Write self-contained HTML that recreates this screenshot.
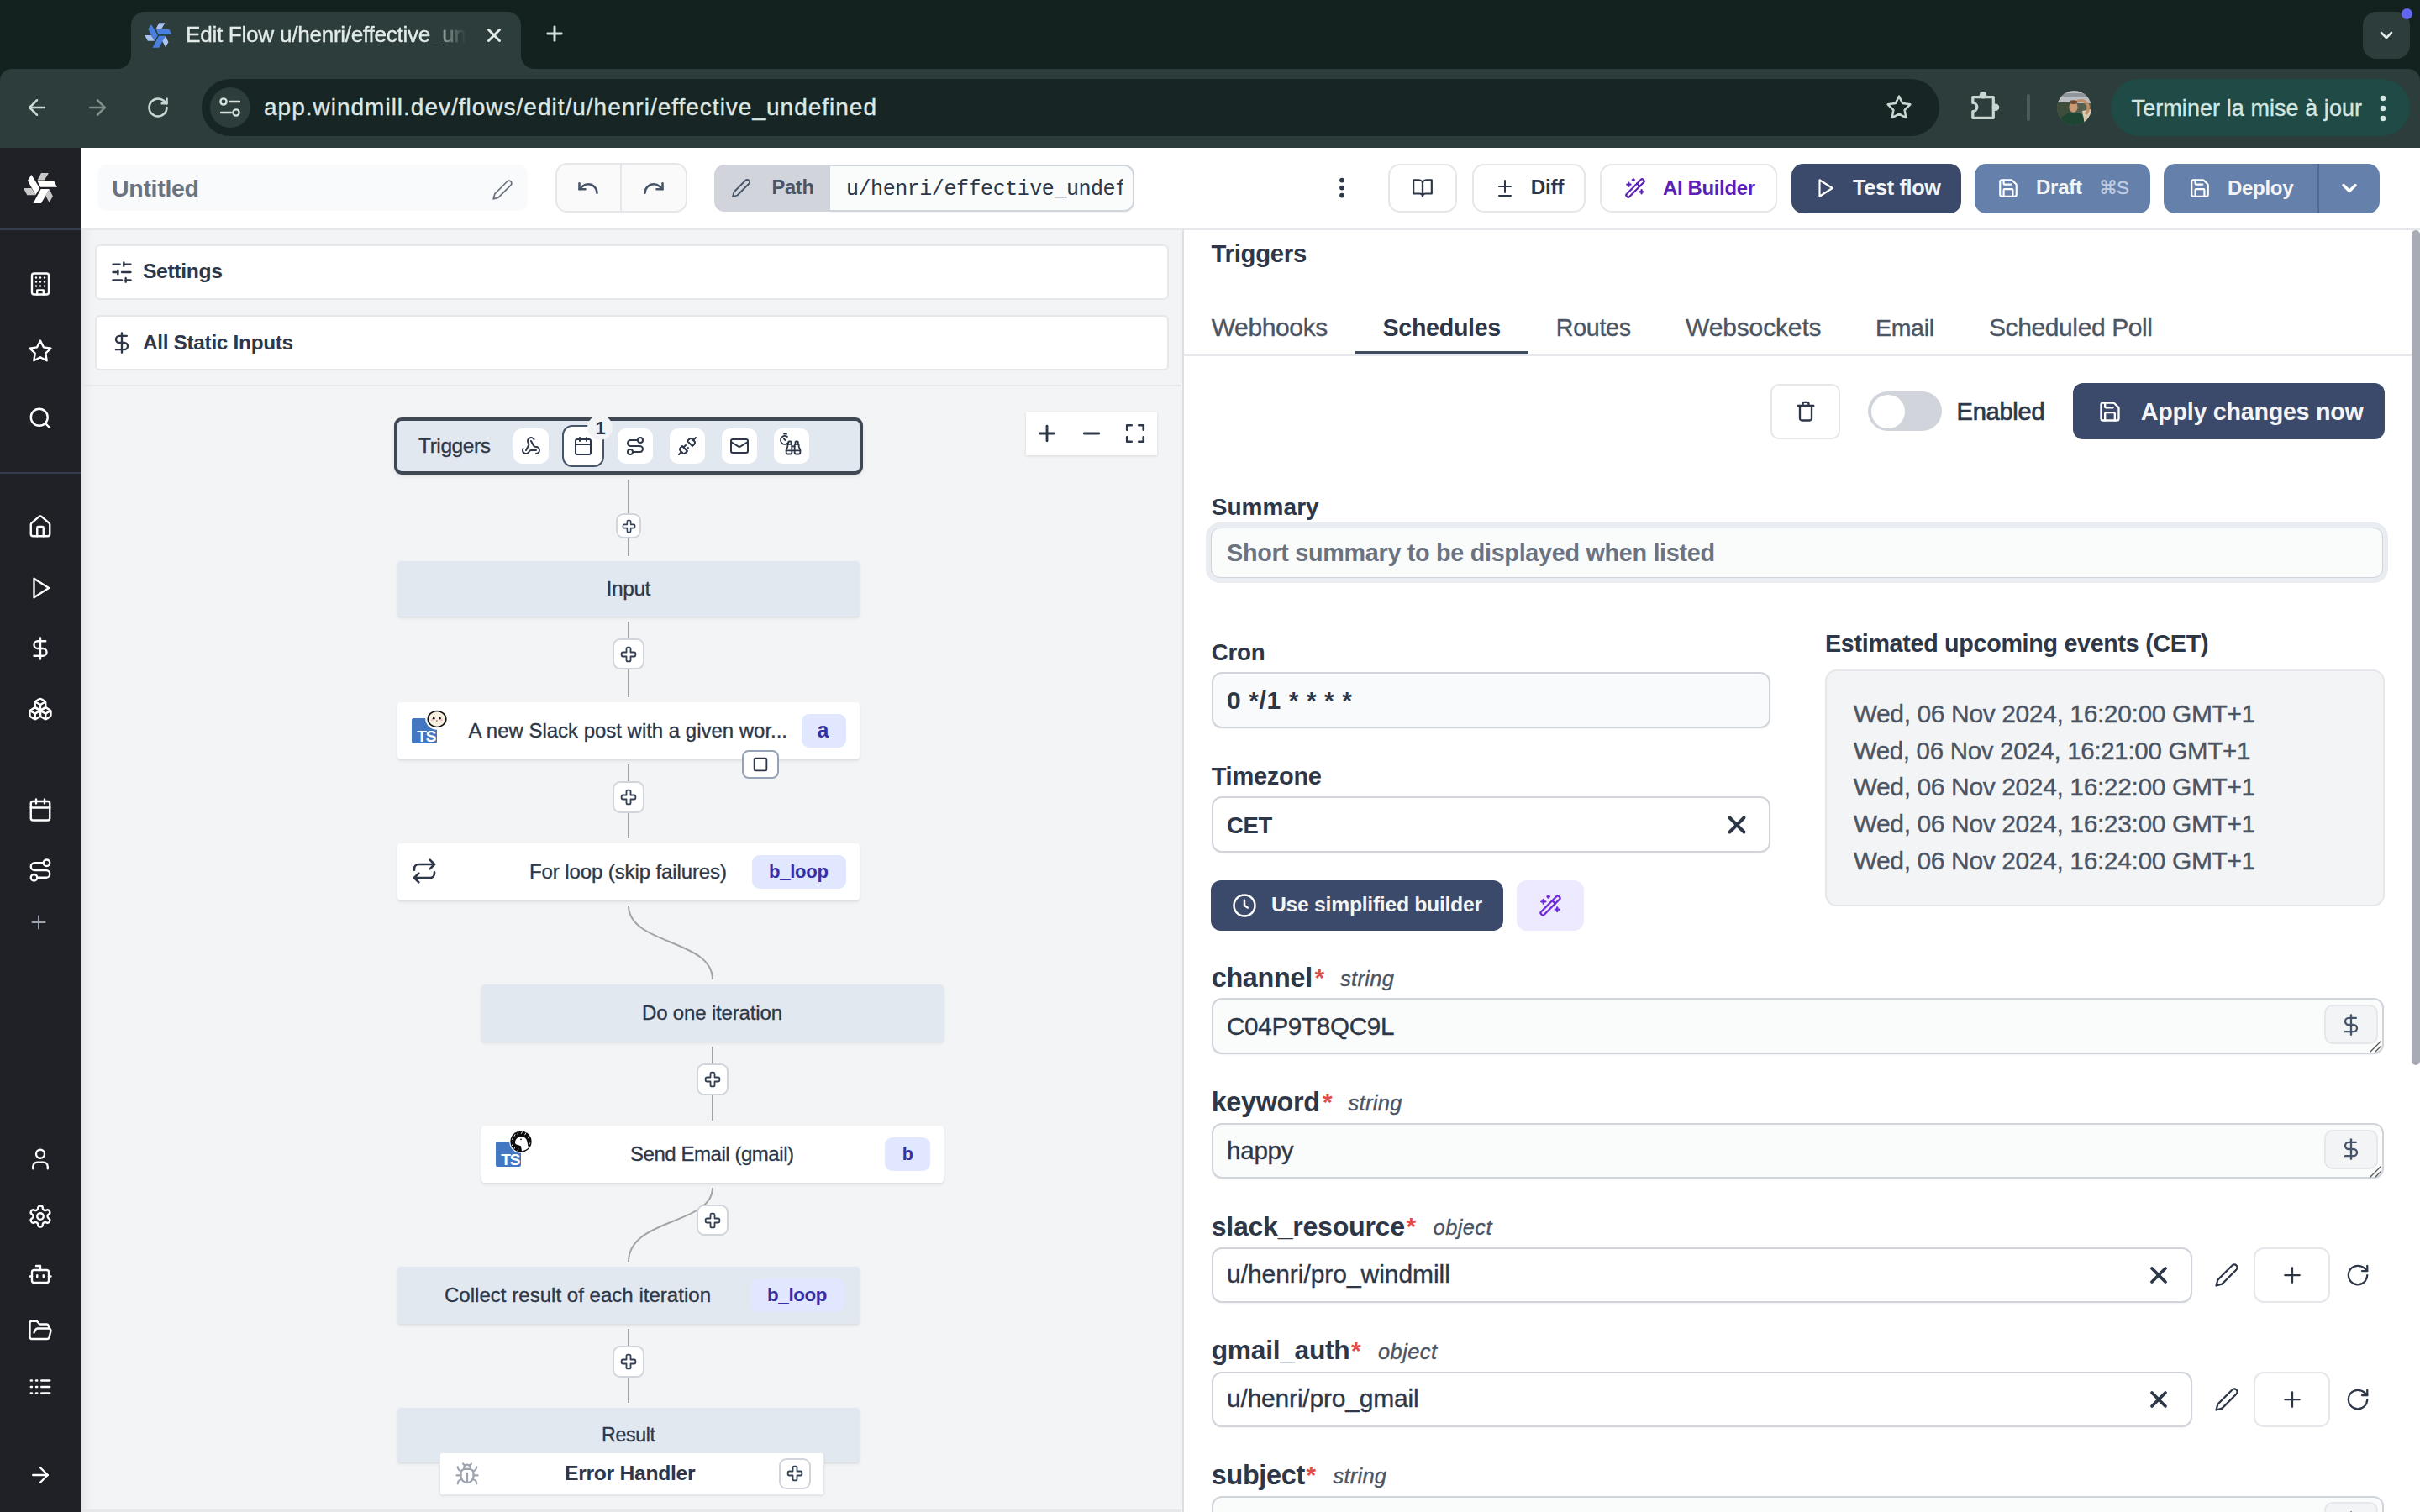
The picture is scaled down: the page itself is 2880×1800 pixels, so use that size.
<!DOCTYPE html>
<html><head><meta charset="utf-8"><style>
html,body{margin:0;padding:0;}
body{width:2880px;height:1800px;position:relative;overflow:hidden;background:#fff;font-family:"Liberation Sans",sans-serif;}
.t{position:absolute;white-space:pre;line-height:1;}
svg{overflow:visible;}
</style></head><body>
<div style="position:absolute;left:0px;top:0px;width:2880px;height:176px;background:#13221f;"></div>
<div style="position:absolute;left:0px;top:82px;width:2880px;height:94px;background:#2c3d3b;border-radius:14px 14px 0 0;"></div>
<div style="position:absolute;left:156px;top:14px;width:464px;height:68px;background:#2c3d3b;border-radius:16px 16px 0 0;"></div>
<svg style="position:absolute;left:140px;top:66px" width="16" height="16"><path d="M0 16 A16 16 0 0 0 16 0 V16 Z" fill="#2c3d3b"/></svg>
<svg style="position:absolute;left:620px;top:66px" width="16" height="16"><path d="M16 16 A16 16 0 0 1 0 0 V16 Z" fill="#2c3d3b"/></svg>
<svg style="position:absolute;left:172px;top:27px" width="33" height="30" viewBox="295 430 690 615" preserveAspectRatio="none">
<polygon points="580,590 905,590 975,718 640,718" fill="#4a7fe0"/>
<polygon points="655,435 805,435 720,580 580,580" fill="#a9c3f0"/>
<polygon points="385,590 460,470 625,740 545,875" fill="#4a7fe0"/>
<polygon points="300,740 460,740 545,878 375,878" fill="#a9c3f0"/>
<polygon points="650,755 820,755 655,1040 495,1040" fill="#4a7fe0"/>
<polygon points="740,880 820,760 890,905 815,1025" fill="#a9c3f0"/>
</svg>
<div id="t1" class="t" style="left:221.0px;top:28.3px;font-size:26.18px;color:#e3ebe8;font-weight:400;font-family:'Liberation Sans', sans-serif;letter-spacing:-0.300px;-webkit-text-stroke:0.35px #e3ebe8;-webkit-mask-image:linear-gradient(90deg,#000 85%,transparent 100%);">Edit Flow u/henri/effective_un</div>
<svg style="position:absolute;left:575.0px;top:29.0px;" width="26" height="26" viewBox="0 0 24 24" fill="none" stroke="#e3ebe8" stroke-width="2.7" stroke-linecap="round" stroke-linejoin="round"><path d="M18 6 6 18"/><path d="m6 6 12 12"/></svg>
<svg style="position:absolute;left:646.0px;top:26.0px;" width="28" height="28" viewBox="0 0 24 24" fill="none" stroke="#d5e0dc" stroke-width="2.5" stroke-linecap="round" stroke-linejoin="round"><path d="M5 12h14"/><path d="M12 5v14"/></svg>
<div style="position:absolute;left:2812px;top:14px;width:56px;height:56px;background:#2c3d3b;border-radius:16px;"></div>
<svg style="position:absolute;left:2828.0px;top:30.0px;" width="24" height="24" viewBox="0 0 24 24" fill="none" stroke="#e3ebe8" stroke-width="2.6" stroke-linecap="round" stroke-linejoin="round"><path d="m6 9 6 6 6-6"/></svg>
<div style="position:absolute;left:2857.5px;top:9.5px;width:13px;height:13px;background:#6366f1;border-radius:50%;"></div>
<svg style="position:absolute;left:29.0px;top:113.0px;" width="30" height="30" viewBox="0 0 24 24" fill="none" stroke="#c9d6d2" stroke-width="2" stroke-linecap="round" stroke-linejoin="round"><path d="m12 19-7-7 7-7"/><path d="M19 12H5"/></svg>
<svg style="position:absolute;left:101.0px;top:113.0px;" width="30" height="30" viewBox="0 0 24 24" fill="none" stroke="#7d8e8a" stroke-width="2" stroke-linecap="round" stroke-linejoin="round"><path d="M5 12h14"/><path d="m12 5 7 7-7 7"/></svg>
<svg style="position:absolute;left:174.0px;top:114.0px;" width="28" height="28" viewBox="0 0 24 24" fill="none" stroke="#c9d6d2" stroke-width="2.2" stroke-linecap="round" stroke-linejoin="round"><path d="M21 12a9 9 0 1 1-9-9c2.52 0 4.93 1 6.74 2.74L21 8"/><path d="M21 3v5h-5"/></svg>
<div style="position:absolute;left:240px;top:94px;width:2068px;height:68px;background:#172624;border-radius:34px;"></div>
<div style="position:absolute;left:250px;top:104px;width:48px;height:48px;background:#2c3d3b;border-radius:50%;"></div>
<svg style="position:absolute;left:260px;top:115px" width="28" height="26" viewBox="0 0 28 26" fill="none" stroke="#d5e0dc" stroke-width="2.4" stroke-linecap="round"><circle cx="6" cy="6" r="3.6"/><path d="M13 6h12"/><circle cx="21" cy="19" r="3.6"/><path d="M3 19h12"/></svg>
<div id="t2" class="t" style="left:314.0px;top:113.8px;font-size:28.0px;color:#dfe7e4;font-weight:400;font-family:'Liberation Sans', sans-serif;letter-spacing:1.000px;-webkit-text-stroke:0.35px #dfe7e4;">app.windmill.dev/flows/edit/u/henri/effective_undefined</div>
<svg style="position:absolute;left:2244.0px;top:112.0px;" width="32" height="32" viewBox="0 0 24 24" fill="none" stroke="#c9d6d2" stroke-width="1.9" stroke-linecap="round" stroke-linejoin="round"><polygon points="12 2 15.09 8.26 22 9.27 17 14.14 18.18 21.02 12 17.77 5.82 21.02 7 14.14 2 9.27 8.91 8.26 12 2"/></svg>
<svg style="position:absolute;left:0;top:0" width="2880" height="176" fill="none"><path d="M2347.8 115.6 H2372.3 V140.3 H2347.8 V132.5 A5 5 0 0 0 2347.8 122.5 Z" stroke="#c9d6d2" stroke-width="3.2" stroke-linejoin="round"/><circle cx="2360" cy="113.3" r="4.3" fill="#c9d6d2"/><circle cx="2375" cy="127.8" r="4.3" fill="#c9d6d2"/></svg>
<div style="position:absolute;left:2412px;top:112px;width:4px;height:32px;background:#4a5a57;border-radius:2px;"></div>
<svg style="position:absolute;left:2447.5px;top:107.5px" width="41" height="41" viewBox="0 0 41 41"><defs><clipPath id="av"><circle cx="20.5" cy="20.5" r="20.5"/></clipPath></defs><g clip-path="url(#av)"><rect width="41" height="41" fill="#5d6b5a"/><rect y="0" width="41" height="15" fill="#b9bec2"/><rect x="6" y="3" width="30" height="4" fill="#8f969b"/><rect x="0" y="14" width="17" height="18" fill="#3e4c3c"/><rect x="22" y="15" width="19" height="10" fill="#55604f"/><path d="M30 24 L41 22 V41 H33 Z" fill="#d8cdb3"/><path d="M2 36 Q9 26 19 25.5 Q29 25 31 30 L33 41 H2 Z" fill="#1e4533"/><path d="M24 13 Q33 9 37 18 Q38 24 34 28" stroke="#c08d66" stroke-width="3.6" fill="none"/><ellipse cx="19.5" cy="19.5" rx="5" ry="6.2" fill="#c99a74"/><ellipse cx="19.5" cy="13.6" rx="4.8" ry="2.4" fill="#6b4a2f"/></g></svg>
<div style="position:absolute;left:2512px;top:94px;width:356px;height:68px;background:#1f4a45;border-radius:34px;"></div>
<div id="t3" class="t" style="left:2536.6px;top:115.6px;font-size:27.0px;color:#d3e6e1;font-weight:400;font-family:'Liberation Sans', sans-serif;letter-spacing:0.064px;-webkit-text-stroke:0.35px #d3e6e1;">Terminer la mise à jour</div>
<svg style="position:absolute;left:2830px;top:112px" width="12" height="34" viewBox="0 0 12 34"><circle cx="6" cy="5" r="3.3" fill="#d3e6e1"/><circle cx="6" cy="17" r="3.3" fill="#d3e6e1"/><circle cx="6" cy="29" r="3.3" fill="#d3e6e1"/></svg>
<div style="position:absolute;left:0px;top:176px;width:96px;height:1624px;background:#1f2127;"></div>
<div style="position:absolute;left:0px;top:271.5px;width:96px;height:2px;background:#353c4b;"></div>
<div style="position:absolute;left:0px;top:561.5px;width:96px;height:2px;background:#353c4b;"></div>
<svg style="position:absolute;left:10px;top:180px" width="80" height="90" viewBox="0 0 1344 1512">
<polygon points="578,592 905,588 975,718 640,718" fill="#ffffff"/>
<polygon points="655,435 805,435 720,580 580,580" fill="#c9c9c9"/>
<polygon points="385,590 460,470 625,740 545,875" fill="#ffffff"/>
<polygon points="300,740 460,740 545,878 375,878" fill="#c9c9c9"/>
<polygon points="650,755 820,755 655,1040 495,1040" fill="#ffffff"/>
<polygon points="740,880 820,760 890,905 815,1025" fill="#c9c9c9"/>
</svg>
<svg style="position:absolute;left:33.0px;top:323.0px;" width="30" height="30" viewBox="0 0 24 24" fill="none" stroke="#ffffff" stroke-width="1.9" stroke-linecap="round" stroke-linejoin="round"><rect width="16" height="20" x="4" y="2" rx="2" ry="2"/><path d="M9 22v-4h6v4"/><path d="M8 6h.01"/><path d="M16 6h.01"/><path d="M12 6h.01"/><path d="M12 10h.01"/><path d="M12 14h.01"/><path d="M16 10h.01"/><path d="M16 14h.01"/><path d="M8 10h.01"/><path d="M8 14h.01"/></svg>
<svg style="position:absolute;left:33.0px;top:403.0px;" width="30" height="30" viewBox="0 0 24 24" fill="none" stroke="#ffffff" stroke-width="1.9" stroke-linecap="round" stroke-linejoin="round"><polygon points="12 2 15.09 8.26 22 9.27 17 14.14 18.18 21.02 12 17.77 5.82 21.02 7 14.14 2 9.27 8.91 8.26 12 2"/></svg>
<svg style="position:absolute;left:33.0px;top:483.0px;" width="30" height="30" viewBox="0 0 24 24" fill="none" stroke="#ffffff" stroke-width="1.9" stroke-linecap="round" stroke-linejoin="round"><circle cx="11" cy="11" r="8"/><path d="m21 21-4.3-4.3"/></svg>
<svg style="position:absolute;left:33.0px;top:612.0px;" width="30" height="30" viewBox="0 0 24 24" fill="none" stroke="#ffffff" stroke-width="1.9" stroke-linecap="round" stroke-linejoin="round"><path d="M15 21v-8a1 1 0 0 0-1-1h-4a1 1 0 0 0-1 1v8"/><path d="M3 10a2 2 0 0 1 .709-1.528l7-5.999a2 2 0 0 1 2.582 0l7 5.999A2 2 0 0 1 21 10v9a2 2 0 0 1-2 2H5a2 2 0 0 1-2-2z"/></svg>
<svg style="position:absolute;left:33.0px;top:685.0px;" width="30" height="30" viewBox="0 0 24 24" fill="none" stroke="#ffffff" stroke-width="1.9" stroke-linecap="round" stroke-linejoin="round"><polygon points="6 3 20 12 6 21 6 3"/></svg>
<svg style="position:absolute;left:33.0px;top:757.0px;" width="30" height="30" viewBox="0 0 24 24" fill="none" stroke="#ffffff" stroke-width="1.9" stroke-linecap="round" stroke-linejoin="round"><line x1="12" x2="12" y1="2" y2="22"/><path d="M17 5H9.5a3.5 3.5 0 0 0 0 7h5a3.5 3.5 0 0 1 0 7H6"/></svg>
<svg style="position:absolute;left:33.0px;top:829.0px;" width="30" height="30" viewBox="0 0 24 24" fill="none" stroke="#ffffff" stroke-width="1.9" stroke-linecap="round" stroke-linejoin="round"><path d="M2.97 12.92A2 2 0 0 0 2 14.63v3.24a2 2 0 0 0 .97 1.71l3 1.8a2 2 0 0 0 2.06 0L12 19v-5.5l-5-3-4.03 2.42Z"/><path d="m7 16.5-4.74-2.85"/><path d="m7 16.5 5-3"/><path d="M7 16.5v5.17"/><path d="M12 13.5V19l3.97 2.38a2 2 0 0 0 2.06 0l3-1.8a2 2 0 0 0 .97-1.71v-3.24a2 2 0 0 0-.97-1.71L17 10.5l-5 3Z"/><path d="m17 16.5-5-3"/><path d="m17 16.5 4.74-2.85"/><path d="M17 16.5v5.17"/><path d="M7.97 4.42A2 2 0 0 0 7 6.13v4.37l5 3 5-3V6.13a2 2 0 0 0-.97-1.71l-3-1.8a2 2 0 0 0-2.06 0l-3 1.8Z"/><path d="M12 8 7.26 5.15"/><path d="m12 8 4.74-2.85"/><path d="M12 13.5V8"/></svg>
<svg style="position:absolute;left:33.0px;top:949.0px;" width="30" height="30" viewBox="0 0 24 24" fill="none" stroke="#ffffff" stroke-width="1.9" stroke-linecap="round" stroke-linejoin="round"><rect width="18" height="18" x="3" y="4" rx="2" ry="2"/><line x1="16" x2="16" y1="2" y2="6"/><line x1="8" x2="8" y1="2" y2="6"/><line x1="3" x2="21" y1="10" y2="10"/></svg>
<svg style="position:absolute;left:33.0px;top:1021.0px;" width="30" height="30" viewBox="0 0 24 24" fill="none" stroke="#ffffff" stroke-width="1.9" stroke-linecap="round" stroke-linejoin="round"><circle cx="6" cy="19" r="3"/><path d="M9 19h8.5a3.5 3.5 0 0 0 0-7h-11a3.5 3.5 0 0 1 0-7H15"/><circle cx="18" cy="5" r="3"/></svg>
<svg style="position:absolute;left:33.0px;top:1365.0px;" width="30" height="30" viewBox="0 0 24 24" fill="none" stroke="#ffffff" stroke-width="1.9" stroke-linecap="round" stroke-linejoin="round"><path d="M19 21v-2a4 4 0 0 0-4-4H9a4 4 0 0 0-4 4v2"/><circle cx="12" cy="7" r="4"/></svg>
<svg style="position:absolute;left:33.0px;top:1433.0px;" width="30" height="30" viewBox="0 0 24 24" fill="none" stroke="#ffffff" stroke-width="1.9" stroke-linecap="round" stroke-linejoin="round"><path d="M12.22 2h-.44a2 2 0 0 0-2 2v.18a2 2 0 0 1-1 1.73l-.43.25a2 2 0 0 1-2 0l-.15-.08a2 2 0 0 0-2.73.73l-.22.38a2 2 0 0 0 .73 2.73l.15.1a2 2 0 0 1 1 1.72v.51a2 2 0 0 1-1 1.74l-.15.09a2 2 0 0 0-.73 2.73l.22.38a2 2 0 0 0 2.73.73l.15-.08a2 2 0 0 1 2 0l.43.25a2 2 0 0 1 1 1.73V20a2 2 0 0 0 2 2h.44a2 2 0 0 0 2-2v-.18a2 2 0 0 1 1-1.73l.43-.25a2 2 0 0 1 2 0l.15.08a2 2 0 0 0 2.73-.73l.22-.39a2 2 0 0 0-.73-2.73l-.15-.08a2 2 0 0 1-1-1.74v-.5a2 2 0 0 1 1-1.74l.15-.09a2 2 0 0 0 .73-2.73l-.22-.38a2 2 0 0 0-2.73-.73l-.15.08a2 2 0 0 1-2 0l-.43-.25a2 2 0 0 1-1-1.73V4a2 2 0 0 0-2-2z"/><circle cx="12" cy="12" r="3"/></svg>
<svg style="position:absolute;left:33.0px;top:1502.0px;" width="30" height="30" viewBox="0 0 24 24" fill="none" stroke="#ffffff" stroke-width="1.9" stroke-linecap="round" stroke-linejoin="round"><path d="M12 8V4H8"/><rect width="16" height="12" x="4" y="8" rx="2"/><path d="M2 14h2"/><path d="M20 14h2"/><path d="M15 13v2"/><path d="M9 13v2"/></svg>
<svg style="position:absolute;left:33.0px;top:1569.0px;" width="30" height="30" viewBox="0 0 24 24" fill="none" stroke="#ffffff" stroke-width="1.9" stroke-linecap="round" stroke-linejoin="round"><path d="m6 14 1.5-2.9A2 2 0 0 1 9.24 10H20a2 2 0 0 1 1.94 2.5l-1.54 6a2 2 0 0 1-1.95 1.5H4a2 2 0 0 1-2-2V5a2 2 0 0 1 2-2h3.9a2 2 0 0 1 1.69.9l.81 1.2a2 2 0 0 0 1.67.9H18a2 2 0 0 1 2 2v2"/></svg>
<svg style="position:absolute;left:33.0px;top:1636.0px;" width="30" height="30" viewBox="0 0 24 24" fill="none" stroke="#ffffff" stroke-width="1.9" stroke-linecap="round" stroke-linejoin="round"><path d="M13 12h8"/><path d="M13 18h8"/><path d="M13 6h8"/><path d="M3 12h1"/><path d="M3 18h1"/><path d="M3 6h1"/><path d="M8 12h1"/><path d="M8 18h1"/><path d="M8 6h1"/></svg>
<svg style="position:absolute;left:33.0px;top:1741.0px;" width="30" height="30" viewBox="0 0 24 24" fill="none" stroke="#ffffff" stroke-width="1.9" stroke-linecap="round" stroke-linejoin="round"><path d="M5 12h14"/><path d="m12 5 7 7-7 7"/></svg>
<svg style="position:absolute;left:33.0px;top:1085.0px;" width="26" height="26" viewBox="0 0 24 24" fill="none" stroke="#9ca3af" stroke-width="1.8" stroke-linecap="round" stroke-linejoin="round"><path d="M5 12h14"/><path d="M12 5v14"/></svg>
<div style="position:absolute;left:96px;top:176px;width:2784px;height:96px;background:#ffffff;"></div>
<div style="position:absolute;left:96px;top:272px;width:2784px;height:2px;background:#e5e7eb;"></div>
<div style="position:absolute;left:116px;top:196px;width:512px;height:55px;background:#f9fafb;border-radius:10px;"></div>
<div id="t4" class="t" style="left:133.0px;top:209.9px;font-size:28.51px;color:#6b7280;font-weight:700;font-family:'Liberation Sans', sans-serif;letter-spacing:-0.300px;">Untitled</div>
<svg style="position:absolute;left:585.0px;top:213.0px;" width="26" height="26" viewBox="0 0 24 24" fill="none" stroke="#6b7280" stroke-width="1.6" stroke-linecap="round" stroke-linejoin="round"><path d="M17 3a2.85 2.83 0 1 1 4 4L7.5 20.5 2 22l1.5-5.5Z"/></svg>
<div style="position:absolute;left:661px;top:194px;width:157px;height:59px;background:#fafafa;border:2px solid #e5e7eb;border-radius:14px;box-sizing:border-box;"></div>
<div style="position:absolute;left:738px;top:195px;width:2px;height:57px;background:#e5e7eb;"></div>
<svg style="position:absolute;left:685.5px;top:210.2px;" width="28" height="28" viewBox="0 0 24 24" fill="none" stroke="#475569" stroke-width="2.2" stroke-linecap="round" stroke-linejoin="round"><path d="M3 7v6h6"/><path d="M21 17a9 9 0 0 0-9-9 9 9 0 0 0-6 2.3L3 13"/></svg>
<svg style="position:absolute;left:763.9px;top:210.2px;" width="28" height="28" viewBox="0 0 24 24" fill="none" stroke="#475569" stroke-width="2.2" stroke-linecap="round" stroke-linejoin="round"><path d="M21 7v6h-6"/><path d="M3 17a9 9 0 0 1 9-9 9 9 0 0 1 6 2.3l3 2.7"/></svg>
<div style="position:absolute;left:850px;top:196px;width:140px;height:55.5px;background:#d1d5db;border-radius:12px 0 0 12px;"></div>
<div style="position:absolute;left:988px;top:196px;width:362px;height:55.5px;background:#fafbfb;border:2px solid #d1d5db;border-left:none;border-radius:0 12px 12px 0;box-sizing:border-box;box-shadow:0 1px 2px rgba(0,0,0,0.06);"></div>
<svg style="position:absolute;left:870.0px;top:211.5px;" width="24" height="24" viewBox="0 0 24 24" fill="none" stroke="#475569" stroke-width="1.8" stroke-linecap="round" stroke-linejoin="round"><path d="M17 3a2.85 2.83 0 1 1 4 4L7.5 20.5 2 22l1.5-5.5Z"/></svg>
<div id="t5" class="t" style="left:918.5px;top:212.4px;font-size:23.68px;color:#475569;font-weight:700;font-family:'Liberation Sans', sans-serif;letter-spacing:-0.300px;">Path</div>
<div style="position:absolute;left:1000px;top:198px;width:336px;height:50px;overflow:hidden;">
<div id="t6" class="t" style="left:7.0px;top:15.2px;font-size:25px;color:#2d3748;font-weight:400;font-family:'Liberation Mono', monospace;letter-spacing:0.000px;letter-spacing:-0.45px;">u/henri/effective_undefined</div>
</div>
<svg style="position:absolute;left:1591px;top:208px" width="12" height="34" viewBox="0 0 12 34"><circle cx="6" cy="6.6" r="2.9" fill="#2d3748"/><circle cx="6" cy="15.6" r="2.9" fill="#2d3748"/><circle cx="6" cy="24.6" r="2.9" fill="#2d3748"/></svg>
<div style="position:absolute;left:1652px;top:194.5px;width:82px;height:58.5px;background:#fff;border:2px solid #e5e7eb;border-radius:14px;box-sizing:border-box;"></div>
<svg style="position:absolute;left:1680.0px;top:211.0px;" width="26" height="26" viewBox="0 0 24 24" fill="none" stroke="#2d3748" stroke-width="2" stroke-linecap="round" stroke-linejoin="round"><path d="M2 3h6a4 4 0 0 1 4 4v14a3 3 0 0 0-3-3H2z"/><path d="M22 3h-6a4 4 0 0 0-4 4v14a3 3 0 0 1 3-3h7z"/></svg>
<div style="position:absolute;left:1752px;top:194.5px;width:135px;height:58.5px;background:#fff;border:2px solid #e5e7eb;border-radius:14px;box-sizing:border-box;"></div>
<svg style="position:absolute;left:1778.5px;top:212.0px;" width="24" height="24" viewBox="0 0 24 24" fill="none" stroke="#2d3748" stroke-width="2" stroke-linecap="round" stroke-linejoin="round"><path d="M12 3v14"/><path d="M5 10h14"/><path d="M5 21h14"/></svg>
<div id="t7" class="t" style="left:1821.8px;top:211.3px;font-size:24.25px;color:#2d3748;font-weight:700;font-family:'Liberation Sans', sans-serif;letter-spacing:-0.300px;">Diff</div>
<div style="position:absolute;left:1904px;top:194.5px;width:211px;height:58.5px;background:#fff;border:2px solid #e5e7eb;border-radius:14px;box-sizing:border-box;"></div>
<svg style="position:absolute;left:1933.0px;top:211.0px;" width="26" height="26" viewBox="0 0 24 24" fill="none" stroke="#5b21b6" stroke-width="2" stroke-linecap="round" stroke-linejoin="round"><path d="m21.64 3.64-1.28-1.28a1.21 1.21 0 0 0-1.72 0L2.36 18.64a1.21 1.21 0 0 0 0 1.72l1.28 1.28a1.2 1.2 0 0 0 1.72 0L21.64 5.36a1.2 1.2 0 0 0 0-1.72"/><path d="m14 7 3 3"/><path d="M5 6v4"/><path d="M19 14v4"/><path d="M10 2v2"/><path d="M7 8H3"/><path d="M21 16h-4"/><path d="M11 3H9"/></svg>
<div id="t8" class="t" style="left:1979.0px;top:211.6px;font-size:23.86px;color:#5b21b6;font-weight:700;font-family:'Liberation Sans', sans-serif;letter-spacing:-0.300px;">AI Builder</div>
<div style="position:absolute;left:2132px;top:194.5px;width:201.5px;height:59px;background:#3b4a6b;border-radius:14px;"></div>
<svg style="position:absolute;left:2159.0px;top:211.0px;" width="26" height="26" viewBox="0 0 24 24" fill="none" stroke="#ffffff" stroke-width="2" stroke-linecap="round" stroke-linejoin="round"><polygon points="6 3 20 12 6 21 6 3"/></svg>
<div id="t9" class="t" style="left:2205.0px;top:210.5px;font-size:25.21px;color:#f3f4f6;font-weight:700;font-family:'Liberation Sans', sans-serif;letter-spacing:-0.300px;">Test flow</div>
<div style="position:absolute;left:2350px;top:194.5px;width:209px;height:59px;background:#6580aa;border-radius:14px;"></div>
<svg style="position:absolute;left:2376.7px;top:211.0px;" width="26" height="26" viewBox="0 0 24 24" fill="none" stroke="#ffffff" stroke-width="2" stroke-linecap="round" stroke-linejoin="round"><path d="M15.2 3a2 2 0 0 1 1.4.6l3.8 3.8a2 2 0 0 1 .6 1.4V19a2 2 0 0 1-2 2H5a2 2 0 0 1-2-2V5a2 2 0 0 1 2-2z"/><path d="M17 21v-7a1 1 0 0 0-1-1H8a1 1 0 0 0-1 1v7"/><path d="M7 3v4a1 1 0 0 0 1 1h7"/></svg>
<div id="t10" class="t" style="left:2423.0px;top:211.4px;font-size:24.09px;color:#f3f4f6;font-weight:700;font-family:'Liberation Sans', sans-serif;letter-spacing:-0.300px;">Draft</div>
<div id="t11" class="t" style="left:2498.0px;top:212.9px;font-size:22.36px;color:#c2cde0;font-weight:400;font-family:'Liberation Sans', sans-serif;letter-spacing:-0.922px;-webkit-text-stroke:0.35px #c2cde0;">⌘S</div>
<div style="position:absolute;left:2575px;top:194.5px;width:257px;height:59px;background:#6580aa;border-radius:14px;"></div>
<div style="position:absolute;left:2757.5px;top:194.5px;width:2px;height:59px;background:#4f6a96;"></div>
<svg style="position:absolute;left:2604.8px;top:211.0px;" width="26" height="26" viewBox="0 0 24 24" fill="none" stroke="#ffffff" stroke-width="2" stroke-linecap="round" stroke-linejoin="round"><path d="M15.2 3a2 2 0 0 1 1.4.6l3.8 3.8a2 2 0 0 1 .6 1.4V19a2 2 0 0 1-2 2H5a2 2 0 0 1-2-2V5a2 2 0 0 1 2-2z"/><path d="M17 21v-7a1 1 0 0 0-1-1H8a1 1 0 0 0-1 1v7"/><path d="M7 3v4a1 1 0 0 0 1 1h7"/></svg>
<div id="t12" class="t" style="left:2651.0px;top:211.5px;font-size:24.03px;color:#f3f4f6;font-weight:700;font-family:'Liberation Sans', sans-serif;letter-spacing:-0.300px;">Deploy</div>
<svg style="position:absolute;left:2781.7px;top:210.0px;" width="28" height="28" viewBox="0 0 24 24" fill="none" stroke="#ffffff" stroke-width="2.9" stroke-linecap="round" stroke-linejoin="round"><path d="m6 9 6 6 6-6"/></svg>
<div style="position:absolute;left:96px;top:274px;width:1312px;height:1526px;background:#f3f4f6;"></div>
<div style="position:absolute;left:96px;top:274px;width:14px;height:1526px;background:linear-gradient(90deg,rgba(0,0,0,0.05),rgba(0,0,0,0));"></div>
<div style="position:absolute;left:1407px;top:274px;width:2px;height:1526px;background:#dcdfe4;"></div>
<div style="position:absolute;left:113px;top:290.5px;width:1277.5px;height:66.3px;background:#fff;border:2px solid #e5e7eb;border-radius:6px;box-sizing:border-box;"></div>
<svg style="position:absolute;left:131.3px;top:309.7px;" width="28" height="28" viewBox="0 0 24 24" fill="none" stroke="#2d3748" stroke-width="2" stroke-linecap="round" stroke-linejoin="round"><line x1="21" x2="14" y1="4" y2="4"/><line x1="10" x2="3" y1="4" y2="4"/><line x1="21" x2="12" y1="12" y2="12"/><line x1="8" x2="3" y1="12" y2="12"/><line x1="21" x2="16" y1="20" y2="20"/><line x1="12" x2="3" y1="20" y2="20"/><line x1="14" x2="14" y1="2" y2="6"/><line x1="8" x2="8" y1="10" y2="14"/><line x1="16" x2="16" y1="18" y2="22"/></svg>
<div id="t13" class="t" style="left:169.9px;top:311.3px;font-size:24.63px;color:#2d3748;font-weight:700;font-family:'Liberation Sans', sans-serif;letter-spacing:-0.300px;">Settings</div>
<div style="position:absolute;left:113px;top:375px;width:1277.5px;height:66px;background:#fff;border:2px solid #e5e7eb;border-radius:6px;box-sizing:border-box;"></div>
<svg style="position:absolute;left:131.0px;top:394.0px;" width="28" height="28" viewBox="0 0 24 24" fill="none" stroke="#2d3748" stroke-width="2" stroke-linecap="round" stroke-linejoin="round"><line x1="12" x2="12" y1="2" y2="22"/><path d="M17 5H9.5a3.5 3.5 0 0 0 0 7h5a3.5 3.5 0 0 1 0 7H6"/></svg>
<div id="t14" class="t" style="left:169.9px;top:395.6px;font-size:24.37px;color:#2d3748;font-weight:700;font-family:'Liberation Sans', sans-serif;letter-spacing:-0.300px;">All Static Inputs</div>
<div style="position:absolute;left:96px;top:457.5px;width:1310px;height:2px;background:#e5e7eb;"></div>
<div style="position:absolute;left:96px;top:1797px;width:1310px;height:3px;background:#e5e7eb;"></div>
<div style="position:absolute;left:1220.6px;top:490px;width:156.4px;height:52px;background:#fff;box-shadow:0 1px 3px rgba(0,0,0,0.12);"></div>
<svg style="position:absolute;left:1231.4px;top:500.6px;" width="30" height="30" viewBox="0 0 24 24" fill="none" stroke="#2d3748" stroke-width="2.3" stroke-linecap="round" stroke-linejoin="round"><path d="M5 12h14"/><path d="M12 5v14"/></svg>
<svg style="position:absolute;left:1283.8px;top:500.6px;" width="30" height="30" viewBox="0 0 24 24" fill="none" stroke="#2d3748" stroke-width="2.3" stroke-linecap="round" stroke-linejoin="round"><path d="M5 12h14"/></svg>
<svg style="position:absolute;left:1338.0px;top:502.6px;" width="26" height="26" viewBox="0 0 24 24" fill="none" stroke="#2d3748" stroke-width="2.5" stroke-linecap="round" stroke-linejoin="round"><path d="M8 3H3v5"/><path d="M21 8V3h-5"/><path d="M3 16v5h5"/><path d="M16 21h5v-5"/></svg>
<div style="position:absolute;left:469px;top:496.6px;width:558px;height:68.4px;background:#e2e8f0;border:4px solid #3f4654;border-radius:9px;box-sizing:border-box;box-shadow:0 2px 4px rgba(0,0,0,0.08);"></div>
<div id="t15" class="t" style="left:498.0px;top:519.3px;font-size:24.51px;color:#2d3748;font-weight:400;font-family:'Liberation Sans', sans-serif;letter-spacing:-0.422px;-webkit-text-stroke:0.35px #2d3748;">Triggers</div>
<div style="position:absolute;left:611px;top:510px;width:42px;height:42px;background:#fff;border-radius:10px;"></div>
<div style="position:absolute;left:735px;top:510px;width:42px;height:42px;background:#fff;border-radius:10px;"></div>
<div style="position:absolute;left:797px;top:510px;width:42px;height:42px;background:#fff;border-radius:10px;"></div>
<div style="position:absolute;left:859px;top:510px;width:42px;height:42px;background:#fff;border-radius:10px;"></div>
<div style="position:absolute;left:921px;top:510px;width:42px;height:42px;background:#fff;border-radius:10px;"></div>
<div style="position:absolute;left:669px;top:506px;width:49.6px;height:49.7px;background:#fff;border:2.5px solid #475569;border-radius:12px;box-sizing:border-box;"></div>
<svg style="position:absolute;left:620.0px;top:519.0px;" width="24" height="24" viewBox="0 0 24 24" fill="none" stroke="#2d3748" stroke-width="2" stroke-linecap="round" stroke-linejoin="round"><path d="M18 16.98h-5.99c-1.1 0-1.95.94-2.48 1.9A4 4 0 0 1 2 17c.01-.7.2-1.4.57-2"/><path d="m6 17 3.13-5.78c.53-.97.1-2.18-.5-3.1a4 4 0 1 1 6.89-4.06"/><path d="m12 6 3.13 5.73C15.66 12.7 16.9 13 18 13a4 4 0 0 1 0 8"/></svg>
<svg style="position:absolute;left:682.0px;top:519.0px;" width="24" height="24" viewBox="0 0 24 24" fill="none" stroke="#2d3748" stroke-width="2" stroke-linecap="round" stroke-linejoin="round"><rect width="18" height="18" x="3" y="4" rx="2" ry="2"/><line x1="16" x2="16" y1="2" y2="6"/><line x1="8" x2="8" y1="2" y2="6"/><line x1="3" x2="21" y1="10" y2="10"/></svg>
<svg style="position:absolute;left:744.0px;top:519.0px;" width="24" height="24" viewBox="0 0 24 24" fill="none" stroke="#2d3748" stroke-width="2" stroke-linecap="round" stroke-linejoin="round"><circle cx="6" cy="19" r="3"/><path d="M9 19h8.5a3.5 3.5 0 0 0 0-7h-11a3.5 3.5 0 0 1 0-7H15"/><circle cx="18" cy="5" r="3"/></svg>
<svg style="position:absolute;left:806.0px;top:519.0px;" width="24" height="24" viewBox="0 0 24 24" fill="none" stroke="#2d3748" stroke-width="2" stroke-linecap="round" stroke-linejoin="round"><path d="m19 5 3-3"/><path d="m2 22 3-3"/><path d="M6.3 20.3a2.4 2.4 0 0 0 3.4 0L12 18l-6-6-2.3 2.3a2.4 2.4 0 0 0 0 3.4Z"/><path d="M7.5 13.5 10 11"/><path d="M10.5 16.5 13 14"/><path d="m12 6 6 6 2.3-2.3a2.4 2.4 0 0 0 0-3.4l-2.6-2.6a2.4 2.4 0 0 0-3.4 0Z"/></svg>
<svg style="position:absolute;left:868.0px;top:519.0px;" width="24" height="24" viewBox="0 0 24 24" fill="none" stroke="#2d3748" stroke-width="2" stroke-linecap="round" stroke-linejoin="round"><rect width="20" height="16" x="2" y="4" rx="2"/><path d="m22 7-8.97 5.7a1.94 1.94 0 0 1-2.06 0L2 7"/></svg>
<svg style="position:absolute;left:934.0px;top:523.0px;" width="20" height="20" viewBox="0 0 24 24" fill="none" stroke="#2d3748" stroke-width="2.2" stroke-linecap="round" stroke-linejoin="round"><path d="M10 10h4"/><path d="M19 7V4a1 1 0 0 0-1-1h-2a1 1 0 0 0-1 1v3"/><path d="M20 21a2 2 0 0 0 2-2v-3.851c0-1.39-2-2.962-2-4.829V8a1 1 0 0 0-1-1h-4a1 1 0 0 0-1 1v11a2 2 0 0 0 2 2z"/><path d="M 22 16 L 2 16"/><path d="M4 21a2 2 0 0 1-2-2v-3.851c0-1.39 2-2.962 2-4.829V8a1 1 0 0 1 1-1h4a1 1 0 0 1 1 1v11a2 2 0 0 1-2 2z"/><path d="M9 7V4a1 1 0 0 0-1-1H6a1 1 0 0 0-1 1v3"/></svg>
<svg style="position:absolute;left:928px;top:515px" width="14" height="16" viewBox="0 0 14 16" fill="none" stroke="#2d3748" stroke-width="1.8" stroke-linecap="round"><path d="M5 1.5h3"/><path d="M9.5 12.5 A5 5 0 1 1 9 5"/><path d="M6.5 9 4.8 7.3"/></svg>
<div style="position:absolute;left:699px;top:493.5px;width:30px;height:30px;background:#f1f3f5;border-radius:50%;"></div>
<div id="t16" class="t" style="left:708.5px;top:498.9px;font-size:22px;color:#2d3748;font-weight:700;font-family:'Liberation Sans', sans-serif;letter-spacing:0.000px;">1</div>
<div style="position:absolute;left:747px;top:571px;width:2px;height:40px;background:#a3a3a3;"></div>
<div style="position:absolute;left:733px;top:611px;width:30px;height:30px;background:#fff;border:2px solid #d1d5db;border-radius:9px;box-sizing:border-box;"></div>
<svg style="position:absolute;left:739.5px;top:617.5px;" width="17" height="17" viewBox="0 0 24 24" fill="none" stroke="#334155" stroke-width="2.2" stroke-linecap="round" stroke-linejoin="round"><path d="M11 2a2 2 0 0 0-2 2v5H4a2 2 0 0 0-2 2v2c0 1.1.9 2 2 2h5v5c0 1.1.9 2 2 2h2a2 2 0 0 0 2-2v-5h5a2 2 0 0 0 2-2v-2a2 2 0 0 0-2-2h-5V4a2 2 0 0 0-2-2h-2z"/></svg>
<div style="position:absolute;left:747px;top:641px;width:2px;height:21px;background:#a3a3a3;"></div>
<div style="position:absolute;left:473px;top:668px;width:550px;height:66px;background:#e2e8f0;border-radius:4px;box-shadow:0 2px 4px rgba(0,0,0,0.07),0 1px 2px rgba(0,0,0,0.05);"></div>
<div id="t17" class="t" style="left:721.6px;top:688.5px;font-size:24.5px;color:#2d3748;font-weight:400;font-family:'Liberation Sans', sans-serif;letter-spacing:-0.425px;-webkit-text-stroke:0.35px #2d3748;">Input</div>
<div style="position:absolute;left:747px;top:740px;width:2px;height:20px;background:#a3a3a3;"></div>
<div style="position:absolute;left:729px;top:760px;width:38px;height:37px;background:#fff;border:2px solid #d1d5db;border-radius:9px;box-sizing:border-box;"></div>
<svg style="position:absolute;left:738.0px;top:768.5px;" width="20" height="20" viewBox="0 0 24 24" fill="none" stroke="#334155" stroke-width="2.2" stroke-linecap="round" stroke-linejoin="round"><path d="M11 2a2 2 0 0 0-2 2v5H4a2 2 0 0 0-2 2v2c0 1.1.9 2 2 2h5v5c0 1.1.9 2 2 2h2a2 2 0 0 0 2-2v-5h5a2 2 0 0 0 2-2v-2a2 2 0 0 0-2-2h-5V4a2 2 0 0 0-2-2h-2z"/></svg>
<div style="position:absolute;left:747px;top:797px;width:2px;height:33px;background:#a3a3a3;"></div>
<div style="position:absolute;left:473px;top:836px;width:550px;height:68px;background:#ffffff;border-radius:4px;box-shadow:0 2px 4px rgba(0,0,0,0.07),0 1px 2px rgba(0,0,0,0.05);"></div>
<div id="t18" class="t" style="left:557.5px;top:857.7px;font-size:24.0px;color:#2d3748;font-weight:400;font-family:'Liberation Sans', sans-serif;letter-spacing:-0.020px;-webkit-text-stroke:0.35px #2d3748;">A new Slack post with a given wor...</div>
<div style="position:absolute;left:954px;top:850px;width:53px;height:40px;background:#e0e7ff;border-radius:9px;"></div>
<div id="t19" class="t" style="left:972.5px;top:856.8px;font-size:25.0px;color:#3730a3;font-weight:700;font-family:'Liberation Sans', sans-serif;letter-spacing:1.094px;">a</div>
<div style="position:absolute;left:883px;top:892.6px;width:43.5px;height:34.8px;background:#fff;border:2px solid #94a3b8;border-radius:8px;box-sizing:border-box;"></div>
<svg style="position:absolute;left:893.7px;top:899.0px;" width="22" height="22" viewBox="0 0 24 24" fill="none" stroke="#2d3748" stroke-width="2" stroke-linecap="round" stroke-linejoin="round"><rect width="16" height="16" x="4" y="4" rx="1.5"/></svg>
<div style="position:absolute;left:747px;top:910px;width:2px;height:20px;background:#a3a3a3;"></div>
<div style="position:absolute;left:729px;top:930px;width:38px;height:37.6px;background:#fff;border:2px solid #d1d5db;border-radius:9px;box-sizing:border-box;"></div>
<svg style="position:absolute;left:738.0px;top:938.8px;" width="20" height="20" viewBox="0 0 24 24" fill="none" stroke="#334155" stroke-width="2.2" stroke-linecap="round" stroke-linejoin="round"><path d="M11 2a2 2 0 0 0-2 2v5H4a2 2 0 0 0-2 2v2c0 1.1.9 2 2 2h5v5c0 1.1.9 2 2 2h2a2 2 0 0 0 2-2v-5h5a2 2 0 0 0 2-2v-2a2 2 0 0 0-2-2h-5V4a2 2 0 0 0-2-2h-2z"/></svg>
<div style="position:absolute;left:747px;top:967.6px;width:2px;height:30.399999999999977px;background:#a3a3a3;"></div>
<div style="position:absolute;left:473px;top:1004px;width:550px;height:68px;background:#ffffff;border-radius:4px;box-shadow:0 2px 4px rgba(0,0,0,0.07),0 1px 2px rgba(0,0,0,0.05);"></div>
<svg style="position:absolute;left:489.0px;top:1021.0px;" width="32" height="32" viewBox="0 0 24 24" fill="none" stroke="#2d3748" stroke-width="2" stroke-linecap="round" stroke-linejoin="round"><path d="m17 2 4 4-4 4"/><path d="M3 11v-1a4 4 0 0 1 4-4h14"/><path d="m7 22-4-4 4-4"/><path d="M21 13v1a4 4 0 0 1-4 4H3"/></svg>
<div id="t20" class="t" style="left:630.0px;top:1025.7px;font-size:24.0px;color:#2d3748;font-weight:400;font-family:'Liberation Sans', sans-serif;letter-spacing:-0.105px;-webkit-text-stroke:0.35px #2d3748;">For loop (skip failures)</div>
<div style="position:absolute;left:895px;top:1018px;width:112px;height:39.5px;background:#e0e7ff;border-radius:9px;"></div>
<div id="t21" class="t" style="left:915.0px;top:1027.3px;font-size:22.12px;color:#3730a3;font-weight:700;font-family:'Liberation Sans', sans-serif;letter-spacing:-0.300px;">b_loop</div>
<svg style="position:absolute;left:0;top:0" width="2880" height="1800" fill="none" stroke="#a3a3a3" stroke-width="2"><path d="M748 1078 C748 1125 848 1118 848 1166"/><path d="M848 1414 C848 1458 748 1450 748 1502"/></svg>
<div style="position:absolute;left:573px;top:1172px;width:550px;height:67.6px;background:#e2e8f0;border-radius:4px;box-shadow:0 2px 4px rgba(0,0,0,0.07),0 1px 2px rgba(0,0,0,0.05);"></div>
<div id="t22" class="t" style="left:764.0px;top:1194.0px;font-size:24.0px;color:#2d3748;font-weight:400;font-family:'Liberation Sans', sans-serif;letter-spacing:-0.163px;-webkit-text-stroke:0.35px #2d3748;">Do one iteration</div>
<div style="position:absolute;left:847px;top:1245.6px;width:2px;height:20.40000000000009px;background:#a3a3a3;"></div>
<div style="position:absolute;left:829px;top:1266px;width:38px;height:37.5px;background:#fff;border:2px solid #d1d5db;border-radius:9px;box-sizing:border-box;"></div>
<svg style="position:absolute;left:838.0px;top:1274.75px;" width="20" height="20" viewBox="0 0 24 24" fill="none" stroke="#334155" stroke-width="2.2" stroke-linecap="round" stroke-linejoin="round"><path d="M11 2a2 2 0 0 0-2 2v5H4a2 2 0 0 0-2 2v2c0 1.1.9 2 2 2h5v5c0 1.1.9 2 2 2h2a2 2 0 0 0 2-2v-5h5a2 2 0 0 0 2-2v-2a2 2 0 0 0-2-2h-5V4a2 2 0 0 0-2-2h-2z"/></svg>
<div style="position:absolute;left:847px;top:1303.5px;width:2px;height:30.5px;background:#a3a3a3;"></div>
<div style="position:absolute;left:573px;top:1340px;width:550px;height:68px;background:#ffffff;border-radius:4px;box-shadow:0 2px 4px rgba(0,0,0,0.07),0 1px 2px rgba(0,0,0,0.05);"></div>
<div id="t23" class="t" style="left:750.0px;top:1362.1px;font-size:24.0px;color:#2d3748;font-weight:400;font-family:'Liberation Sans', sans-serif;letter-spacing:-0.455px;-webkit-text-stroke:0.35px #2d3748;">Send Email (gmail)</div>
<div style="position:absolute;left:1053px;top:1354px;width:53.5px;height:39.5px;background:#e0e7ff;border-radius:9px;"></div>
<div id="t24" class="t" style="left:1073.7px;top:1364.2px;font-size:21.5px;color:#3730a3;font-weight:700;font-family:'Liberation Sans', sans-serif;letter-spacing:-0.845px;">b</div>
<div style="position:absolute;left:829px;top:1434px;width:38px;height:37px;background:#fff;border:2px solid #d1d5db;border-radius:9px;box-sizing:border-box;"></div>
<svg style="position:absolute;left:838.0px;top:1442.5px;" width="20" height="20" viewBox="0 0 24 24" fill="none" stroke="#334155" stroke-width="2.2" stroke-linecap="round" stroke-linejoin="round"><path d="M11 2a2 2 0 0 0-2 2v5H4a2 2 0 0 0-2 2v2c0 1.1.9 2 2 2h5v5c0 1.1.9 2 2 2h2a2 2 0 0 0 2-2v-5h5a2 2 0 0 0 2-2v-2a2 2 0 0 0-2-2h-5V4a2 2 0 0 0-2-2h-2z"/></svg>
<div style="position:absolute;left:473px;top:1508px;width:550px;height:67.5px;background:#e2e8f0;border-radius:4px;box-shadow:0 2px 4px rgba(0,0,0,0.07),0 1px 2px rgba(0,0,0,0.05);"></div>
<div id="t25" class="t" style="left:529.0px;top:1529.7px;font-size:24.0px;color:#2d3748;font-weight:400;font-family:'Liberation Sans', sans-serif;letter-spacing:0.027px;-webkit-text-stroke:0.35px #2d3748;">Collect result of each iteration</div>
<div style="position:absolute;left:893px;top:1522px;width:112px;height:39.5px;background:#e0e7ff;border-radius:9px;"></div>
<div id="t26" class="t" style="left:913.0px;top:1531.1px;font-size:22.28px;color:#3730a3;font-weight:700;font-family:'Liberation Sans', sans-serif;letter-spacing:-0.300px;">b_loop</div>
<div style="position:absolute;left:747px;top:1581.5px;width:2px;height:20.5px;background:#a3a3a3;"></div>
<div style="position:absolute;left:729px;top:1602px;width:38px;height:37.5px;background:#fff;border:2px solid #d1d5db;border-radius:9px;box-sizing:border-box;"></div>
<svg style="position:absolute;left:738.0px;top:1610.75px;" width="20" height="20" viewBox="0 0 24 24" fill="none" stroke="#334155" stroke-width="2.2" stroke-linecap="round" stroke-linejoin="round"><path d="M11 2a2 2 0 0 0-2 2v5H4a2 2 0 0 0-2 2v2c0 1.1.9 2 2 2h5v5c0 1.1.9 2 2 2h2a2 2 0 0 0 2-2v-5h5a2 2 0 0 0 2-2v-2a2 2 0 0 0-2-2h-5V4a2 2 0 0 0-2-2h-2z"/></svg>
<div style="position:absolute;left:747px;top:1639.5px;width:2px;height:30.5px;background:#a3a3a3;"></div>
<div style="position:absolute;left:473px;top:1676px;width:550px;height:65px;background:#e2e8f0;border-radius:4px;box-shadow:0 2px 4px rgba(0,0,0,0.07),0 1px 2px rgba(0,0,0,0.05);"></div>
<div id="t27" class="t" style="left:716.0px;top:1697.4px;font-size:23.11px;color:#2d3748;font-weight:400;font-family:'Liberation Sans', sans-serif;letter-spacing:-0.300px;-webkit-text-stroke:0.35px #2d3748;">Result</div>
<div style="position:absolute;left:523px;top:1728.8px;width:457.6px;height:51.2px;background:#fff;border:1.5px solid #e5e7eb;border-radius:3px;box-sizing:border-box;box-shadow:0 1px 3px rgba(0,0,0,0.08);"></div>
<svg style="position:absolute;left:541.0px;top:1739.5px;" width="30" height="30" viewBox="0 0 24 24" fill="none" stroke="#9ca3af" stroke-width="1.8" stroke-linecap="round" stroke-linejoin="round"><path d="m8 2 1.88 1.88"/><path d="M14.12 3.88 16 2"/><path d="M9 7.13v-1a3.003 3.003 0 1 1 6 0v1"/><path d="M12 20c-3.3 0-6-2.7-6-6v-3a4 4 0 0 1 4-4h4a4 4 0 0 1 4 4v3c0 3.3-2.7 6-6 6"/><path d="M12 20v-9"/><path d="M6.53 9C4.6 8.8 3 7.1 3 5"/><path d="M6 13H2"/><path d="M3 21c0-2.1 1.7-3.9 3.8-4"/><path d="M20.97 5c0 2.1-1.6 3.8-3.5 4"/><path d="M22 13h-4"/><path d="M17.2 17c2.1.1 3.8 1.9 3.8 4"/></svg>
<div id="t28" class="t" style="left:672.0px;top:1742.1px;font-size:24.71px;color:#2d3748;font-weight:700;font-family:'Liberation Sans', sans-serif;letter-spacing:-0.300px;">Error Handler</div>
<div style="position:absolute;left:927px;top:1735.6px;width:38px;height:37.2px;background:#fff;border:2px solid #d1d5db;border-radius:9px;box-sizing:border-box;"></div>
<svg style="position:absolute;left:936.0px;top:1744.1999999999998px;" width="20" height="20" viewBox="0 0 24 24" fill="none" stroke="#334155" stroke-width="2.2" stroke-linecap="round" stroke-linejoin="round"><path d="M11 2a2 2 0 0 0-2 2v5H4a2 2 0 0 0-2 2v2c0 1.1.9 2 2 2h5v5c0 1.1.9 2 2 2h2a2 2 0 0 0 2-2v-5h5a2 2 0 0 0 2-2v-2a2 2 0 0 0-2-2h-5V4a2 2 0 0 0-2-2h-2z"/></svg>
<svg style="position:absolute;left:490px;top:843px" width="44" height="44" viewBox="0 0 44 44">
<defs><mask id="m490855"><rect width="44" height="44" fill="#fff"/><circle cx="30" cy="12" r="13.8" fill="#000"/></mask></defs>
<rect x="0" y="12" width="30" height="30" rx="2.5" fill="#4377c2" mask="url(#m490855)"/>
<text x="6.2" y="40.3" font-family="Liberation Sans" font-weight="700" font-size="19" letter-spacing="-1" fill="#fff">TS</text>
<ellipse cx="30" cy="13" rx="10.8" ry="9.5" fill="#f7efe0" stroke="#111" stroke-width="1.6"/><circle cx="26.2" cy="12.2" r="1.4" fill="#111"/><circle cx="33.4" cy="12.2" r="1.4" fill="#111"/><path d="M28.6 14.6h2.4l-1.2 1.6z" fill="#c0392b"/><circle cx="24.5" cy="14" r="1.3" fill="#f5b8c8"/><circle cx="35.2" cy="14" r="1.3" fill="#f5b8c8"/></svg>
<svg style="position:absolute;left:590px;top:1347px" width="44" height="44" viewBox="0 0 44 44">
<defs><mask id="m5901359"><rect width="44" height="44" fill="#fff"/><circle cx="30" cy="12" r="13.8" fill="#000"/></mask></defs>
<rect x="0" y="12" width="30" height="30" rx="2.5" fill="#4377c2" mask="url(#m5901359)"/>
<text x="6.2" y="40.3" font-family="Liberation Sans" font-weight="700" font-size="19" letter-spacing="-1" fill="#fff">TS</text>
<circle cx="30" cy="12" r="12.6" fill="#0b0b0b"/><path d="M19.5 9.4 L20.5 7.4" stroke="#fff" stroke-width="0.9" stroke-linecap="round"/><path d="M22.0 5.5 L23.0 3.5" stroke="#fff" stroke-width="0.9" stroke-linecap="round"/><path d="M25.9 3.0 L26.9 1.0" stroke="#fff" stroke-width="0.9" stroke-linecap="round"/><path d="M30.4 2.4 L31.4 0.4" stroke="#fff" stroke-width="0.9" stroke-linecap="round"/><path d="M34.8 3.8 L35.8 1.8" stroke="#fff" stroke-width="0.9" stroke-linecap="round"/><path d="M38.7 7.7 L39.7 5.7" stroke="#fff" stroke-width="0.9" stroke-linecap="round"/><path d="M39.7 15.7 L40.7 13.7" stroke="#fff" stroke-width="0.9" stroke-linecap="round"/><path d="M37.6 19.8 L38.6 17.8" stroke="#fff" stroke-width="0.9" stroke-linecap="round"/><path d="M19.5 16.6 L20.5 14.6" stroke="#fff" stroke-width="0.9" stroke-linecap="round"/><path d="M22.0 20.5 L23.0 18.5" stroke="#fff" stroke-width="0.9" stroke-linecap="round"/><path d="M25.9 23.0 L26.9 21.0" stroke="#fff" stroke-width="0.9" stroke-linecap="round"/><path d="M23 13.5 C23 8.5 27 6 30.5 6 C34.5 6 37 9 37.5 12.5 L38.8 19.5 C36.5 21.5 34 23 31 23.3 L30 17.5 C28.5 16 23.5 16.5 23 13.5 Z" fill="#fff"/><circle cx="30" cy="9.3" r="0.9" fill="#111"/></svg>
<div style="position:absolute;left:1409px;top:274px;width:1461px;height:1526px;background:#ffffff;"></div>
<div style="position:absolute;left:2870px;top:273.5px;width:10px;height:994px;background:#a8abb3;border-radius:5px 5px 5px 5px;"></div>
<div id="t29" class="t" style="left:1441.6px;top:287.2px;font-size:29.33px;color:#2d3748;font-weight:700;font-family:'Liberation Sans', sans-serif;letter-spacing:-0.300px;">Triggers</div>
<div id="t30" class="t" style="left:1441.7px;top:374.6px;font-size:30.0px;color:#4b5563;font-weight:400;font-family:'Liberation Sans', sans-serif;letter-spacing:-0.372px;-webkit-text-stroke:0.35px #4b5563;">Webhooks</div>
<div id="t31" class="t" style="left:1645.5px;top:375.8px;font-size:28.64px;color:#2d3748;font-weight:700;font-family:'Liberation Sans', sans-serif;letter-spacing:-0.300px;">Schedules</div>
<div id="t32" class="t" style="left:1851.8px;top:375.8px;font-size:28.63px;color:#4b5563;font-weight:400;font-family:'Liberation Sans', sans-serif;letter-spacing:-0.300px;-webkit-text-stroke:0.35px #4b5563;">Routes</div>
<div id="t33" class="t" style="left:2006.0px;top:374.6px;font-size:30.0px;color:#4b5563;font-weight:400;font-family:'Liberation Sans', sans-serif;letter-spacing:-0.140px;-webkit-text-stroke:0.35px #4b5563;">Websockets</div>
<div id="t34" class="t" style="left:2232.0px;top:375.9px;font-size:28.48px;color:#4b5563;font-weight:400;font-family:'Liberation Sans', sans-serif;letter-spacing:-0.300px;-webkit-text-stroke:0.35px #4b5563;">Email</div>
<div id="t35" class="t" style="left:2367.0px;top:374.6px;font-size:30.0px;color:#4b5563;font-weight:400;font-family:'Liberation Sans', sans-serif;letter-spacing:-0.396px;-webkit-text-stroke:0.35px #4b5563;">Scheduled Poll</div>
<div style="position:absolute;left:1408px;top:422px;width:1462px;height:2px;background:#e5e7eb;"></div>
<div style="position:absolute;left:1613px;top:418px;width:206px;height:4px;background:#3f4b5f;"></div>
<div style="position:absolute;left:2107.4px;top:456.5px;width:82.6px;height:66.1px;background:#fff;border:2px solid #e5e7eb;border-radius:10px;box-sizing:border-box;"></div>
<svg style="position:absolute;left:2135.0px;top:476.0px;" width="28" height="28" viewBox="0 0 24 24" fill="none" stroke="#2d3748" stroke-width="2" stroke-linecap="round" stroke-linejoin="round"><path d="M4 6h16"/><path d="M18 6v13c0 1-1 2-2 2H8c-1 0-2-1-2-2V6"/><path d="M9 6V4c0-1 .8-1.6 1.6-1.6h2.8C14.2 2.4 15 3 15 4v2"/></svg>
<div style="position:absolute;left:2222.8px;top:465.8px;width:88px;height:47.6px;background:#d1d5db;border-radius:24px;"></div>
<div style="position:absolute;left:2227px;top:469.5px;width:40px;height:40px;background:#fff;border-radius:50%;box-shadow:0 0 0 1px #d1d5db;"></div>
<div id="t36" class="t" style="left:2328.6px;top:475.9px;font-size:29.1px;color:#2d3748;font-weight:400;font-family:'Liberation Sans', sans-serif;letter-spacing:-0.300px;-webkit-text-stroke:0.7px #2d3748;">Enabled</div>
<div style="position:absolute;left:2466.8px;top:456px;width:371px;height:67px;background:#3b4a6b;border-radius:12px;"></div>
<svg style="position:absolute;left:2496.8px;top:476.0px;" width="28" height="28" viewBox="0 0 24 24" fill="none" stroke="#ffffff" stroke-width="2" stroke-linecap="round" stroke-linejoin="round"><path d="M15.2 3a2 2 0 0 1 1.4.6l3.8 3.8a2 2 0 0 1 .6 1.4V19a2 2 0 0 1-2 2H5a2 2 0 0 1-2-2V5a2 2 0 0 1 2-2z"/><path d="M17 21v-7a1 1 0 0 0-1-1H8a1 1 0 0 0-1 1v7"/><path d="M7 3v4a1 1 0 0 0 1 1h7"/></svg>
<div id="t37" class="t" style="left:2547.8px;top:476.2px;font-size:28.74px;color:#f3f4f6;font-weight:700;font-family:'Liberation Sans', sans-serif;letter-spacing:-0.300px;">Apply changes now</div>
<div id="t38" class="t" style="left:1441.7px;top:590.3px;font-size:28.0px;color:#2d3748;font-weight:700;font-family:'Liberation Sans', sans-serif;letter-spacing:0.062px;">Summary</div>
<div style="position:absolute;left:1435px;top:622.2px;width:1407px;height:71.4px;background:#e9ecf1;border-radius:17px;"></div>
<div style="position:absolute;left:1441.2px;top:628.2px;width:1395px;height:59.5px;background:#fafbfb;border:1.6px solid #cfd3da;border-radius:11px;box-sizing:border-box;"></div>
<div id="t39" class="t" style="left:1460.0px;top:643.6px;font-size:28.78px;color:#6b7280;font-weight:700;font-family:'Liberation Sans', sans-serif;letter-spacing:-0.300px;">Short summary to be displayed when listed</div>
<div id="t40" class="t" style="left:1441.7px;top:762.5px;font-size:27.81px;color:#2d3748;font-weight:700;font-family:'Liberation Sans', sans-serif;letter-spacing:-0.300px;">Cron</div>
<div style="position:absolute;left:1441.7px;top:800.4px;width:665.6000000000001px;height:66.89999999999998px;background:#f9fafb;border:2px solid #d1d5db;border-radius:12px;box-sizing:border-box;box-shadow:0 1px 2px rgba(0,0,0,0.05);"></div>
<div id="t41" class="t" style="left:1460.0px;top:818.6px;font-size:30.0px;color:#2d3748;font-weight:700;font-family:'Liberation Sans', sans-serif;letter-spacing:0.604px;">0 */1 * * * *</div>
<div id="t42" class="t" style="left:1441.7px;top:909.5px;font-size:29.0px;color:#2d3748;font-weight:700;font-family:'Liberation Sans', sans-serif;letter-spacing:-0.276px;">Timezone</div>
<div style="position:absolute;left:1441.7px;top:948px;width:665.6000000000001px;height:67px;background:#ffffff;border:2px solid #d1d5db;border-radius:12px;box-sizing:border-box;box-shadow:0 1px 2px rgba(0,0,0,0.05);"></div>
<div id="t43" class="t" style="left:1460.0px;top:968.8px;font-size:27.45px;color:#2d3748;font-weight:700;font-family:'Liberation Sans', sans-serif;letter-spacing:-0.300px;">CET</div>
<svg style="position:absolute;left:2049.7px;top:964.8px;" width="34" height="34" viewBox="0 0 24 24" fill="none" stroke="#2d3748" stroke-width="2.8" stroke-linecap="round" stroke-linejoin="round"><path d="M18 6 6 18"/><path d="m6 6 12 12"/></svg>
<div style="position:absolute;left:1440.8px;top:1048px;width:348.2px;height:60px;background:#3b4a6b;border-radius:12px;"></div>
<svg style="position:absolute;left:1466.0px;top:1063.0px;" width="30" height="30" viewBox="0 0 24 24" fill="none" stroke="#ffffff" stroke-width="2" stroke-linecap="round" stroke-linejoin="round"><circle cx="12" cy="12" r="10"/><polyline points="12 7 12 12 15 14"/></svg>
<div id="t44" class="t" style="left:1513.0px;top:1065.0px;font-size:24.77px;color:#f3f4f6;font-weight:700;font-family:'Liberation Sans', sans-serif;letter-spacing:-0.300px;">Use simplified builder</div>
<div style="position:absolute;left:1805px;top:1048px;width:79.7px;height:60px;background:#ede9fe;border-radius:12px;"></div>
<svg style="position:absolute;left:1830.8px;top:1064.0px;" width="28" height="28" viewBox="0 0 24 24" fill="none" stroke="#6d28d9" stroke-width="2" stroke-linecap="round" stroke-linejoin="round"><path d="m21.64 3.64-1.28-1.28a1.21 1.21 0 0 0-1.72 0L2.36 18.64a1.21 1.21 0 0 0 0 1.72l1.28 1.28a1.2 1.2 0 0 0 1.72 0L21.64 5.36a1.2 1.2 0 0 0 0-1.72"/><path d="m14 7 3 3"/><path d="M5 6v4"/><path d="M19 14v4"/><path d="M10 2v2"/><path d="M7 8H3"/><path d="M21 16h-4"/><path d="M11 3H9"/></svg>
<div id="t45" class="t" style="left:2172.0px;top:752.4px;font-size:28.7px;color:#2d3748;font-weight:700;font-family:'Liberation Sans', sans-serif;letter-spacing:-0.300px;">Estimated upcoming events (CET)</div>
<div style="position:absolute;left:2172px;top:796.6px;width:666px;height:282.8px;background:#f3f4f6;border:2px solid #e5e7eb;border-radius:14px;box-sizing:border-box;"></div>
<div id="t46" class="t" style="left:2205.7px;top:834.6px;font-size:30.0px;color:#4b5563;font-weight:400;font-family:'Liberation Sans', sans-serif;letter-spacing:-0.387px;-webkit-text-stroke:0.35px #4b5563;">Wed, 06 Nov 2024, 16:20:00 GMT+1</div>
<div id="t47" class="t" style="left:2205.7px;top:878.7px;font-size:29.47px;color:#4b5563;font-weight:400;font-family:'Liberation Sans', sans-serif;letter-spacing:-0.300px;-webkit-text-stroke:0.35px #4b5563;">Wed, 06 Nov 2024, 16:21:00 GMT+1</div>
<div id="t48" class="t" style="left:2205.7px;top:921.9px;font-size:30.0px;color:#4b5563;font-weight:400;font-family:'Liberation Sans', sans-serif;letter-spacing:-0.387px;-webkit-text-stroke:0.35px #4b5563;">Wed, 06 Nov 2024, 16:22:00 GMT+1</div>
<div id="t49" class="t" style="left:2205.7px;top:966.0px;font-size:30.0px;color:#4b5563;font-weight:400;font-family:'Liberation Sans', sans-serif;letter-spacing:-0.387px;-webkit-text-stroke:0.35px #4b5563;">Wed, 06 Nov 2024, 16:23:00 GMT+1</div>
<div id="t50" class="t" style="left:2205.7px;top:1009.6px;font-size:30.0px;color:#4b5563;font-weight:400;font-family:'Liberation Sans', sans-serif;letter-spacing:-0.387px;-webkit-text-stroke:0.35px #4b5563;">Wed, 06 Nov 2024, 16:24:00 GMT+1</div>
<div id="t51" class="t" style="left:1441.7px;top:1147.6px;font-size:32.37px;color:#2d3748;font-weight:700;font-family:'Liberation Sans', sans-serif;letter-spacing:-0.300px;">channel</div>
<div id="t52" class="t" style="left:1564.5px;top:1148.6px;font-size:30px;color:#e24c4c;font-weight:700;font-family:'Liberation Sans', sans-serif;letter-spacing:0.000px;">*</div>
<div id="t53" class="t" style="left:1595.0px;top:1153.4px;font-size:25.5px;color:#4b5563;font-weight:400;font-family:'Liberation Sans', sans-serif;letter-spacing:0.328px;font-style:italic;-webkit-text-stroke:0.35px #4b5563;">string</div>
<div style="position:absolute;left:1441.7px;top:1188.4px;width:1395.3px;height:66.59999999999991px;background:#fafbfb;border:2px solid #d1d5db;border-radius:12px;box-sizing:border-box;box-shadow:0 1px 2px rgba(0,0,0,0.05);"></div>
<div style="position:absolute;left:2766px;top:1196.4px;width:63.5px;height:47px;background:#f3f4f6;border:2px solid #e5e7eb;border-radius:10px;box-sizing:border-box;"></div>
<svg style="position:absolute;left:2783.8px;top:1205.9px;" width="28" height="28" viewBox="0 0 24 24" fill="none" stroke="#475569" stroke-width="2" stroke-linecap="round" stroke-linejoin="round"><line x1="12" x2="12" y1="2" y2="22"/><path d="M17 5H9.5a3.5 3.5 0 0 0 0 7h5a3.5 3.5 0 0 1 0 7H6"/></svg>
<svg style="position:absolute;left:2820px;top:1239.4px" width="14" height="14" viewBox="0 0 14 14" stroke="#555" stroke-width="1.3" stroke-linecap="round"><path d="M1 13 13 1"/><path d="M7 13 13 7"/></svg>
<div id="t54" class="t" style="left:1460.0px;top:1206.9px;font-size:29.62px;color:#2d3748;font-weight:400;font-family:'Liberation Sans', sans-serif;letter-spacing:-0.300px;-webkit-text-stroke:0.35px #2d3748;">C04P9T8QC9L</div>
<div id="t55" class="t" style="left:1441.7px;top:1295.6px;font-size:32.31px;color:#2d3748;font-weight:700;font-family:'Liberation Sans', sans-serif;letter-spacing:-0.300px;">keyword</div>
<div id="t56" class="t" style="left:1574.0px;top:1296.6px;font-size:30px;color:#e24c4c;font-weight:700;font-family:'Liberation Sans', sans-serif;letter-spacing:0.000px;">*</div>
<div id="t57" class="t" style="left:1604.5px;top:1301.4px;font-size:25.5px;color:#4b5563;font-weight:400;font-family:'Liberation Sans', sans-serif;letter-spacing:0.328px;font-style:italic;-webkit-text-stroke:0.35px #4b5563;">string</div>
<div style="position:absolute;left:1441.7px;top:1336.6px;width:1395.3px;height:66.40000000000009px;background:#fafbfb;border:2px solid #d1d5db;border-radius:12px;box-sizing:border-box;box-shadow:0 1px 2px rgba(0,0,0,0.05);"></div>
<div style="position:absolute;left:2766px;top:1344.6px;width:63.5px;height:47px;background:#f3f4f6;border:2px solid #e5e7eb;border-radius:10px;box-sizing:border-box;"></div>
<svg style="position:absolute;left:2783.8px;top:1354.1px;" width="28" height="28" viewBox="0 0 24 24" fill="none" stroke="#475569" stroke-width="2" stroke-linecap="round" stroke-linejoin="round"><line x1="12" x2="12" y1="2" y2="22"/><path d="M17 5H9.5a3.5 3.5 0 0 0 0 7h5a3.5 3.5 0 0 1 0 7H6"/></svg>
<svg style="position:absolute;left:2820px;top:1387.6px" width="14" height="14" viewBox="0 0 14 14" stroke="#555" stroke-width="1.3" stroke-linecap="round"><path d="M1 13 13 1"/><path d="M7 13 13 7"/></svg>
<div id="t58" class="t" style="left:1460.0px;top:1354.6px;font-size:29.66px;color:#2d3748;font-weight:400;font-family:'Liberation Sans', sans-serif;letter-spacing:-0.300px;-webkit-text-stroke:0.35px #2d3748;">happy</div>
<div id="t59" class="t" style="left:1441.7px;top:1443.8px;font-size:32.19px;color:#2d3748;font-weight:700;font-family:'Liberation Sans', sans-serif;letter-spacing:-0.300px;">slack_resource</div>
<div id="t60" class="t" style="left:1673.5px;top:1444.6px;font-size:30px;color:#e24c4c;font-weight:700;font-family:'Liberation Sans', sans-serif;letter-spacing:0.000px;">*</div>
<div id="t61" class="t" style="left:1705.6px;top:1449.4px;font-size:25.5px;color:#4b5563;font-weight:400;font-family:'Liberation Sans', sans-serif;letter-spacing:0.391px;font-style:italic;-webkit-text-stroke:0.35px #4b5563;">object</div>
<div style="position:absolute;left:1441.7px;top:1484.6px;width:1167.6000000000001px;height:66.40000000000009px;background:#ffffff;border:2px solid #d1d5db;border-radius:12px;box-sizing:border-box;box-shadow:0 1px 2px rgba(0,0,0,0.05);"></div>
<div id="t62" class="t" style="left:1460.0px;top:1501.6px;font-size:30.0px;color:#2d3748;font-weight:400;font-family:'Liberation Sans', sans-serif;letter-spacing:-0.047px;-webkit-text-stroke:0.35px #2d3748;">u/henri/pro_windmill</div>
<svg style="position:absolute;left:2552.8px;top:1501.8px;" width="32" height="32" viewBox="0 0 24 24" fill="none" stroke="#2d3748" stroke-width="2.8" stroke-linecap="round" stroke-linejoin="round"><path d="M18 6 6 18"/><path d="m6 6 12 12"/></svg>
<svg style="position:absolute;left:2634.5px;top:1502.6px;" width="30" height="30" viewBox="0 0 24 24" fill="none" stroke="#2d3748" stroke-width="1.8" stroke-linecap="round" stroke-linejoin="round"><path d="M17 3a2.85 2.83 0 1 1 4 4L7.5 20.5 2 22l1.5-5.5Z"/></svg>
<div style="position:absolute;left:2682.4px;top:1484.6px;width:90.6px;height:66.4px;background:#fff;border:2px solid #e5e7eb;border-radius:12px;box-sizing:border-box;"></div>
<svg style="position:absolute;left:2712.8px;top:1502.8px;" width="30" height="30" viewBox="0 0 24 24" fill="none" stroke="#2d3748" stroke-width="1.8" stroke-linecap="round" stroke-linejoin="round"><path d="M5 12h14"/><path d="M12 5v14"/></svg>
<svg style="position:absolute;left:2791.0px;top:1502.8px;" width="30" height="30" viewBox="0 0 24 24" fill="none" stroke="#2d3748" stroke-width="1.8" stroke-linecap="round" stroke-linejoin="round"><path d="M21 12a9 9 0 1 1-9-9c2.52 0 4.93 1 6.74 2.74L21 8"/><path d="M21 3v5h-5"/></svg>
<div id="t63" class="t" style="left:1441.7px;top:1592.1px;font-size:31.79px;color:#2d3748;font-weight:700;font-family:'Liberation Sans', sans-serif;letter-spacing:-0.300px;">gmail_auth</div>
<div id="t64" class="t" style="left:1608.0px;top:1592.6px;font-size:30px;color:#e24c4c;font-weight:700;font-family:'Liberation Sans', sans-serif;letter-spacing:0.000px;">*</div>
<div id="t65" class="t" style="left:1640.0px;top:1597.4px;font-size:25.5px;color:#4b5563;font-weight:400;font-family:'Liberation Sans', sans-serif;letter-spacing:0.391px;font-style:italic;-webkit-text-stroke:0.35px #4b5563;">object</div>
<div style="position:absolute;left:1441.7px;top:1632.8px;width:1167.6000000000001px;height:66.40000000000009px;background:#ffffff;border:2px solid #d1d5db;border-radius:12px;box-sizing:border-box;box-shadow:0 1px 2px rgba(0,0,0,0.05);"></div>
<div id="t66" class="t" style="left:1460.0px;top:1649.8px;font-size:30.0px;color:#2d3748;font-weight:400;font-family:'Liberation Sans', sans-serif;letter-spacing:-0.194px;-webkit-text-stroke:0.35px #2d3748;">u/henri/pro_gmail</div>
<svg style="position:absolute;left:2552.8px;top:1650.0px;" width="32" height="32" viewBox="0 0 24 24" fill="none" stroke="#2d3748" stroke-width="2.8" stroke-linecap="round" stroke-linejoin="round"><path d="M18 6 6 18"/><path d="m6 6 12 12"/></svg>
<svg style="position:absolute;left:2634.5px;top:1650.8px;" width="30" height="30" viewBox="0 0 24 24" fill="none" stroke="#2d3748" stroke-width="1.8" stroke-linecap="round" stroke-linejoin="round"><path d="M17 3a2.85 2.83 0 1 1 4 4L7.5 20.5 2 22l1.5-5.5Z"/></svg>
<div style="position:absolute;left:2682.4px;top:1632.8px;width:90.6px;height:66.4px;background:#fff;border:2px solid #e5e7eb;border-radius:12px;box-sizing:border-box;"></div>
<svg style="position:absolute;left:2712.8px;top:1651.0px;" width="30" height="30" viewBox="0 0 24 24" fill="none" stroke="#2d3748" stroke-width="1.8" stroke-linecap="round" stroke-linejoin="round"><path d="M5 12h14"/><path d="M12 5v14"/></svg>
<svg style="position:absolute;left:2791.0px;top:1651.0px;" width="30" height="30" viewBox="0 0 24 24" fill="none" stroke="#2d3748" stroke-width="1.8" stroke-linecap="round" stroke-linejoin="round"><path d="M21 12a9 9 0 1 1-9-9c2.52 0 4.93 1 6.74 2.74L21 8"/><path d="M21 3v5h-5"/></svg>
<div id="t67" class="t" style="left:1441.7px;top:1739.6px;font-size:32.4px;color:#2d3748;font-weight:700;font-family:'Liberation Sans', sans-serif;letter-spacing:-0.300px;">subject</div>
<div id="t68" class="t" style="left:1554.5px;top:1740.6px;font-size:30px;color:#e24c4c;font-weight:700;font-family:'Liberation Sans', sans-serif;letter-spacing:0.000px;">*</div>
<div id="t69" class="t" style="left:1586.6px;top:1745.4px;font-size:25.5px;color:#4b5563;font-weight:400;font-family:'Liberation Sans', sans-serif;letter-spacing:0.208px;font-style:italic;-webkit-text-stroke:0.35px #4b5563;">string</div>
<div style="position:absolute;left:1441.7px;top:1780.6px;width:1395.3px;height:69.40000000000009px;background:#fafbfb;border:2px solid #d1d5db;border-radius:12px;box-sizing:border-box;box-shadow:0 1px 2px rgba(0,0,0,0.05);"></div>
<div style="position:absolute;left:2766px;top:1788.4px;width:63.5px;height:47px;background:#f3f4f6;border:2px solid #e5e7eb;border-radius:10px;box-sizing:border-box;"></div>
<svg style="position:absolute;left:2783.8px;top:1797.9px;" width="28" height="28" viewBox="0 0 24 24" fill="none" stroke="#475569" stroke-width="2" stroke-linecap="round" stroke-linejoin="round"><line x1="12" x2="12" y1="2" y2="22"/><path d="M17 5H9.5a3.5 3.5 0 0 0 0 7h5a3.5 3.5 0 0 1 0 7H6"/></svg>
</body></html>
